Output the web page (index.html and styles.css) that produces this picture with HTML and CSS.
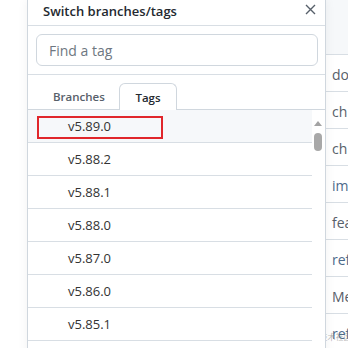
FILE: index.html
```html
<!DOCTYPE html>
<html lang="en">
<head>
  <meta charset="UTF-8">
  <meta name="viewport" content="width=device-width, initial-scale=1.0">
  <title>Switch branches/tags</title>
  <link rel="stylesheet" href="styles.css">
</head>
<body>

  <div class="backdrop-left"></div>

  <!-- Tag picker -->
  <div class="modal">
    <div class="modal-header">
      <span class="modal-title">Switch branches/tags</span>
      <svg class="close" width="11" height="11" viewBox="0 0 11 11">
        <path d="M1 1 L10 10 M10 1 L1 10" stroke="#57606a" stroke-width="1.4" fill="none"/>
      </svg>
    </div>

    <div class="filter">
      <input class="filter-input" type="text" placeholder="Find a tag">
    </div>

    <div class="tabs">
      <span class="tab">Branches</span>
      <span class="tab selected">Tags</span>
    </div>

    <div class="list-wrap">
      <ul class="list">
        <li class="item active"><span class="mark"></span>v5.89.0</li>
        <li class="item">v5.88.2</li>
        <li class="item">v5.88.1</li>
        <li class="item">v5.88.0</li>
        <li class="item">v5.87.0</li>
        <li class="item">v5.86.0</li>
        <li class="item">v5.85.1</li>
        <li class="item">v5.85.0</li>
      </ul>
      <div class="scrollbar">
        <span class="arrow"></span>
        <span class="thumb"></span>
      </div>
    </div>
  </div>

  <!-- Commit list behind the picker -->
  <div class="behind">
    <div class="behind-head"></div>
    <div class="row">do</div>
    <div class="row">ch</div>
    <div class="row">ch</div>
    <div class="row link">im</div>
    <div class="row">fea</div>
    <div class="row link">ref</div>
    <div class="row">Me</div>
    <div class="row link">ref</div>
  </div>

  <div class="watermark">@稀土掘金技术社区</div>

</body>
</html>
```

FILE: styles.css
```css
body {
  margin: 0;
  padding: 0;
  width: 348px;
  height: 348px;
  overflow: hidden;
  display: flex;
  align-items: flex-start;
  background: #ffffff;
  font-family: "Open Sans", "Noto Sans", Arial, sans-serif;
  color: #24292f;
}
.backdrop-left {
  width: 27px;
  flex: none;
}
.modal {
  width: 297px;
  flex: none;
  background: white;
  border-left: 1px solid #d0d7de;
  border-right: 1px solid #d0d7de;
  box-shadow: 0 0 10px rgba(0, 0, 0, 0.06);
  position: relative;
  z-index: 1;
}
.modal-header {
  height: 25px;
  display: flex;
  align-items: center;
  justify-content: space-between;
  padding: 0 9px 0 15px;
  border-bottom: 1px solid #d8dee4;
}
.modal-title {
  font-size: 13px;
  font-weight: 600;
  margin-top: -4px;
}
.close {
  margin-top: -7px;
}
.filter {
  padding: 8px 8px 8px 8px;
  border-bottom: 1px solid #d8dee4;
}
.filter-input {
  box-sizing: border-box;
  width: 282px;
  height: 32px;
  border: 1px solid #d0d7de;
  border-radius: 6px;
  padding: 0 12px;
  font-family: inherit;
  font-size: 14px;
  color: #24292f;
  outline: none;
}
.filter-input::placeholder {
  color: #6e7781;
}
.tabs {
  display: flex;
  gap: 0;
  padding: 8px 0 0 12px;
  border-bottom: 1px solid #d0d7de;
  height: 26px;
}
.tab {
  box-sizing: border-box;
  height: 27px;
  font-size: 11.5px;
  font-weight: 600;
  line-height: 28px;
  color: #57606a;
}
.tab:first-child {
  width: 79px;
  padding-left: 13px;
}
.tab.selected {
  background: white;
  color: #24292f;
  border: 1px solid #d0d7de;
  border-bottom: none;
  border-radius: 6px 6px 0 0;
  width: 58px;
  text-align: center;
}
.list-wrap {
  display: flex;
}
.list {
  list-style: none;
  margin: 0;
  padding: 0;
  width: 284px;
}
.item {
  position: relative;
  height: 32px;
  line-height: 33px;
  padding-left: 40px;
  font-size: 13px;
  color: #333;
  border-bottom: 1px solid #d8dee4;
}
.item.active {
  background: #f6f8fa;
}
.mark {
  position: absolute;
  left: 9px;
  top: 6px;
  width: 122px;
  height: 19px;
  border: 2px solid #e0262b;
}
.scrollbar {
  width: 13px;
  position: relative;
}
.arrow {
  position: absolute;
  left: 2px;
  top: 11px;
  width: 0;
  height: 0;
  border-left: 4px solid transparent;
  border-right: 4px solid transparent;
  border-bottom: 5px solid #a3a3a3;
}
.thumb {
  position: absolute;
  left: 2px;
  top: 23px;
  width: 8px;
  height: 18px;
  border-radius: 4px;
  background: #a8a8a8;
}
.behind {
  flex: 1;
  border-left: 1px solid #d0d7de;
  margin-left: -1px;
}
.behind-head {
  height: 54px;
  background: #f6f8fa;
  border-bottom: 1px solid #d8dee4;
}
.row {
  height: 36px;
  line-height: 40px;
  padding-left: 6px;
  font-size: 14px;
  color: #57606a;
  border-bottom: 1px solid #d8dee4;
  white-space: nowrap;
}
.row.link {
  color: #4d6a8a;
}
.watermark {
  position: absolute;
  left: 280px;
  top: 331px;
  font-size: 8px;
  color: rgba(120, 120, 120, 0.55);
  font-family: "Noto Sans CJK SC", sans-serif;
  white-space: nowrap;
}
```
